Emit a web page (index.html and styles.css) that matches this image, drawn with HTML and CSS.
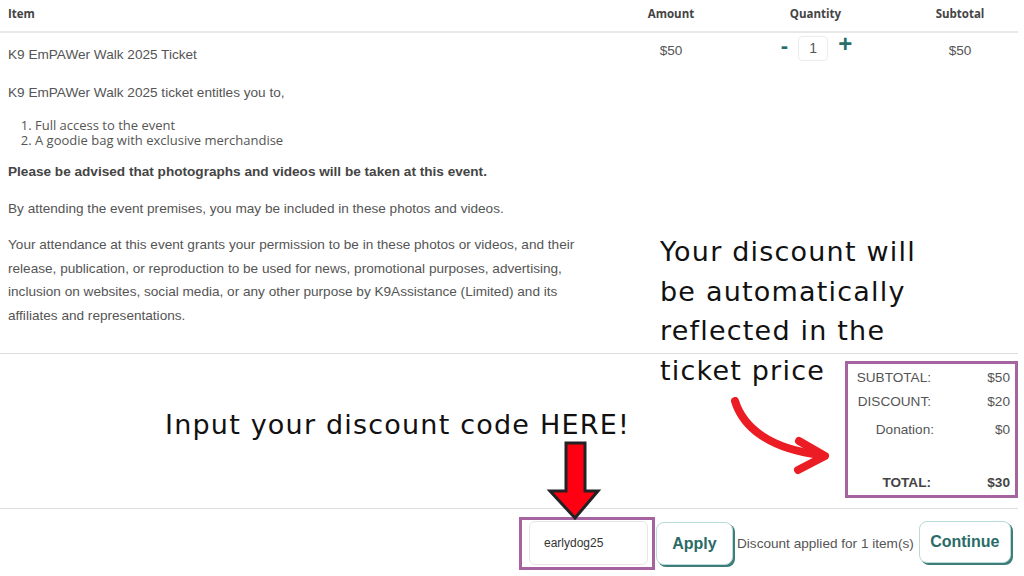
FILE: index.html
```html
<!DOCTYPE html>
<html lang="en">
<head>
<meta charset="utf-8">
<title>Cart</title>
<link rel="stylesheet" href="styles.css">
</head>
<body>
<div class="page">
  <div class="cart-head">
    <div class="col-item">Item</div>
    <div class="col-amt">Amount</div>
    <div class="col-qty">Quantity</div>
    <div class="col-sub">Subtotal</div>
  </div>

  <div class="cart-row">
    <div class="col-item">
      <div class="item-name">K9 EmPAWer Walk 2025 Ticket</div>
      <p class="p-intro">K9 EmPAWer Walk 2025 ticket entitles you to,</p>
      <ol class="perks">
        <li>Full access to the event</li>
        <li>A goodie bag with exclusive merchandise</li>
      </ol>
      <p class="p-bold">Please be advised that photographs and videos will be taken at this event.</p>
      <p class="p-plain">By attending the event premises, you may be included in these photos and videos.</p>
      <p class="p-long">Your attendance at this event grants your permission to be in these photos or videos, and their release, publication, or reproduction to be used for news, promotional purposes, advertising, inclusion on websites, social media, or any other purpose by K9Assistance (Limited) and its affiliates and representations.</p>
    </div>
    <div class="col-amt price">$50</div>
    <div class="col-qty">
      <div class="qty">
        <span class="qty-btn minus">-</span>
        <span class="qty-input">1</span>
        <span class="qty-btn plus">+</span>
      </div>
    </div>
    <div class="col-sub price">$50</div>
  </div>

  <div class="summary-area">
    <div class="summary">
      <div class="sum-row r1"><span class="lbl">SUBTOTAL:</span><span class="val">$50</span></div>
      <div class="sum-row r2"><span class="lbl">DISCOUNT:</span><span class="val">$20</span></div>
      <div class="sum-row r3"><span class="lbl">Donation:</span><span class="val">$0</span></div>
      <div class="sum-row r4 total"><span class="lbl">TOTAL:</span><span class="val">$30</span></div>
    </div>
  </div>

  <div class="footer">
    <div class="code-box">
      <div class="code-input">earlydog25</div>
    </div>
    <button class="btn apply">Apply</button>
    <span class="applied">Discount applied for 1 item(s)</span>
    <button class="btn continue">Continue</button>
  </div>

  <div class="note note-right">Your discount will<br>be automatically<br>reflected in the<br>ticket price</div>
  <div class="note note-left">Input your discount code HERE!</div>

  <svg class="arrow-curve" width="110" height="80" viewBox="0 0 110 80">
    <path d="M6 4 C 14 30, 40 52, 92 58" fill="none" stroke="#ec1c24" stroke-width="8" stroke-linecap="round"/>
    <path d="M70 44 L 96 59 L 69 73" fill="none" stroke="#ec1c24" stroke-width="8" stroke-linecap="round" stroke-linejoin="round"/>
  </svg>

  <svg class="arrow-down" width="60" height="84" viewBox="0 0 60 84">
    <polygon points="21,3 40,3 40,51 53,51 30,78 5,51 21,51" fill="#ff0013" stroke="#222" stroke-width="3" stroke-linejoin="miter"/>
  </svg>
</div>
</body>
</html>
```

FILE: styles.css
```css
* { box-sizing: border-box; }

html, body {
  margin: 0;
  padding: 0;
  background: #ffffff;
}

body {
  font-family: "Liberation Sans", Arial, sans-serif;
  color: #555555;
  font-size: 13.6px;
}

.page {
  position: relative;
  width: 1018px;
  height: 576px;
  overflow: visible;
}

.cart-head,
.cart-row {
  display: grid;
  grid-template-columns: 613px 116px 173px 116px;
}

.cart-head {
  height: 33px;
  border-bottom: 2px solid #e8e8e8;
  font-family: "Open Sans", sans-serif;
  font-weight: 700;
  font-size: 11.5px;
  color: #444444;
  line-height: 16px;
  padding-top: 6px;
}

.col-item { padding-left: 8px; }
.col-amt, .col-qty, .col-sub { text-align: center; }

.cart-row {
  padding-bottom: 26px;
  border-bottom: 1px solid #dddddd;
}

.item-name {
  margin-top: 14px;
  line-height: 16px;
}

.p-intro {
  margin: 22px 0 0;
  line-height: 16px;
}

.perks {
  margin: 17px 0 0;
  padding-left: 27px;
  font-family: "Open Sans", sans-serif;
  font-size: 13px;
  line-height: 15px;
}

.p-bold {
  margin: 16px 0 0;
  line-height: 16px;
  font-weight: 700;
  color: #444444;
}

.p-plain {
  margin: 21px 0 0;
  line-height: 16px;
}

.p-long {
  margin: 16px 0 0;
  width: 600px;
  line-height: 23.5px;
}

.price {
  padding-top: 10px;
  line-height: 16px;
}

.qty {
  display: inline-flex;
  align-items: flex-start;
  margin-top: 3px;
  margin-left: 2px;
}

.qty-btn {
  font-family: "Liberation Sans", Arial, sans-serif;
  font-weight: 700;
  color: #2a6e69;
  font-size: 22px;
  line-height: 18px;
}

.qty-btn.minus { margin-right: 10px; margin-top: 1px; }
.qty-btn.plus { margin-left: 10px; margin-top: -1px; font-size: 24px; }

.qty-input {
  display: inline-block;
  width: 30px;
  height: 25px;
  border: 1px solid #ececec;
  border-radius: 4px;
  line-height: 23px;
  font-size: 14px;
  color: #555555;
}

.summary-area {
  display: flex;
  justify-content: flex-end;
  padding: 7px 0 10px;
  border-bottom: 1px solid #dddddd;
}

.summary {
  width: 173px;
  height: 137px;
  border: 3px solid #a5649f;
  padding: 6px 5px 4px 0;
  display: flex;
  flex-direction: column;
}

.sum-row {
  display: grid;
  grid-template-columns: 83px 1fr;
  line-height: 16px;
}

.sum-row .lbl { text-align: right; }
.sum-row .val { text-align: right; }
.sum-row.r2 { margin-top: 8px; }
.sum-row.r3 { margin-top: 12px; }
.sum-row.r3 .lbl { margin-right: -3px; }
.sum-row.r4 { margin-top: 37px; }

.total {
  font-weight: 700;
  color: #444444;
}

.footer {
  display: flex;
  align-items: center;
  padding-top: 8px;
  padding-left: 519px;
}

.code-box {
  width: 136px;
  height: 53px;
  border: 3px solid #a5649f;
  padding: 1px 4px 2px 7px;
}

.code-input {
  height: 44px;
  border: 1px solid #e6e6e6;
  border-radius: 6px;
  padding-left: 14px;
  font-size: 12px;
  line-height: 42px;
  color: #333333;
}

.btn {
  font-family: "Liberation Sans", Arial, sans-serif;
  font-weight: 700;
  font-size: 16px;
  color: #2b6b67;
  background: #ffffff;
  border: 1px solid #b8dbd8;
  border-radius: 8px;
  box-shadow: 2px 2px 0 #3e7d79;
  padding: 0;
}

.btn.apply {
  width: 77px;
  height: 43px;
  margin-left: 1px;
}

.applied {
  margin-left: 4px;
  font-size: 13.6px;
  color: #555555;
}

.btn.continue {
  width: 92px;
  height: 42px;
  margin-left: 5px;
  margin-top: -3px;
}

.note {
  position: absolute;
  font-family: "DejaVu Sans", sans-serif;
  color: #111111;
  font-size: 27px;
  letter-spacing: 1.2px;
}

.note-right {
  left: 660px;
  top: 232px;
  line-height: 39.5px;
}

.note-left {
  left: 165px;
  top: 405px;
  line-height: 40px;
}

.arrow-curve {
  position: absolute;
  left: 729px;
  top: 397px;
}

.arrow-down {
  position: absolute;
  left: 545px;
  top: 440px;
}
```
